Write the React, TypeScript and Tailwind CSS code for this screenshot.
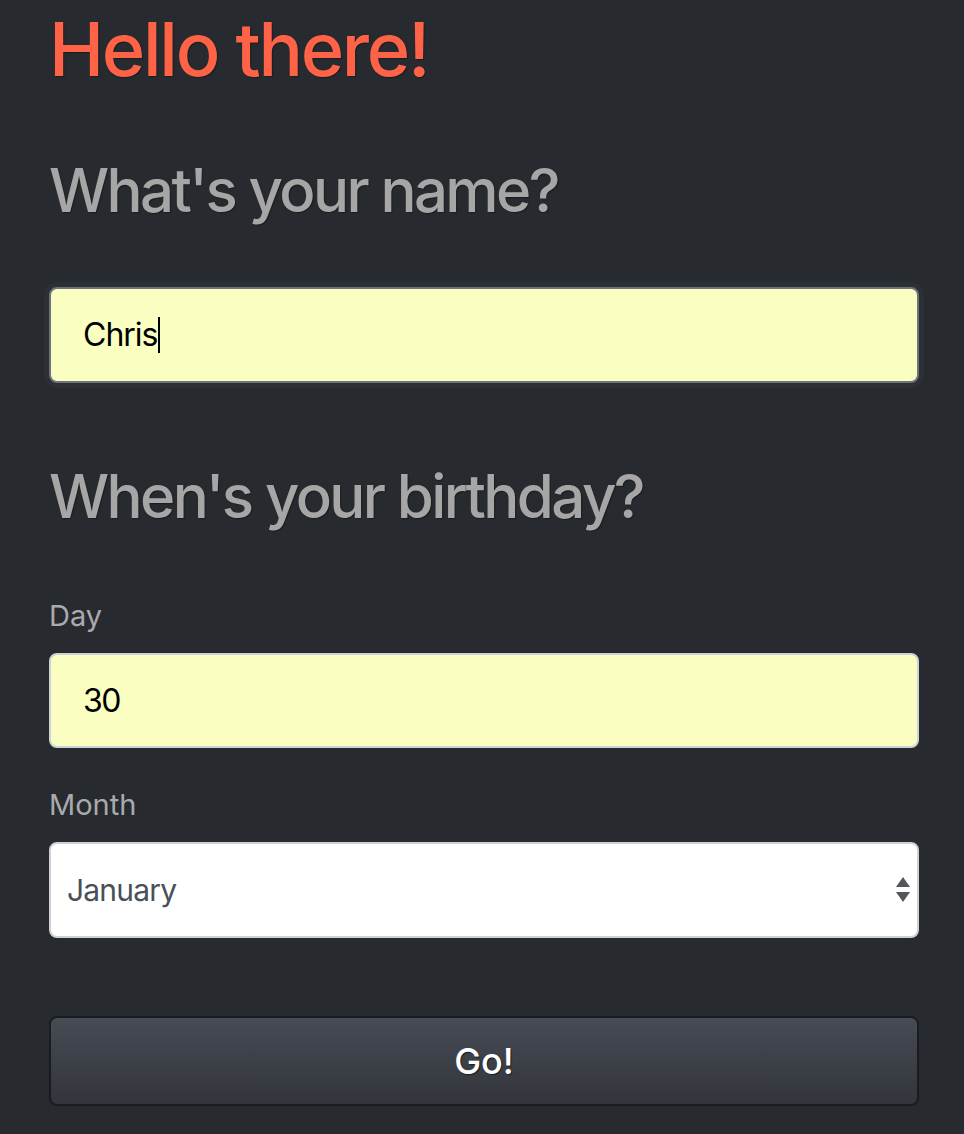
import React from "react";

export default function App() {
  return (
    <div
      className="min-h-[1134px] w-full bg-[#272a2f] pl-[49px] pr-[45px] pt-[12px] pb-[29px]"
      style={{ fontFamily: "Inter, 'Noto Sans', 'Liberation Sans', sans-serif" }}
    >
      <h1 className="text-[74px] leading-none font-medium text-[#ff6347] tracking-[-2.3px] [text-shadow:1px_1px_1px_#1b1d21]">
        Hello there!
      </h1>

      <h2 className="mt-[74px] text-[60px] leading-none font-medium text-[#a6a6a6] tracking-[-2.6px] [text-shadow:1px_1px_1px_#1b1d21]">
        What's your name?
      </h2>

      <div className="mt-[67px] rounded-[8px] shadow-[0_0_0_5px_#2c2f35]">
        <div className="flex h-[96px] items-center rounded-[8px] border-2 border-[#6c737a] bg-[#fafec1] pl-[32px] text-[32px] tracking-[-1px] text-black">
          <span>Chris</span>
          <span className="ml-[1px] inline-block h-[36px] w-[2px] bg-black" />
        </div>
      </div>

      <h2 className="mt-[83px] text-[60px] leading-none font-medium text-[#a6a6a6] tracking-[-2.6px] [text-shadow:1px_1px_1px_#1b1d21]">
        When's your birthday?
      </h2>

      <label className="mt-[75px] block text-[29px] leading-none text-[#a8aaad]">Day</label>
      <input
        readOnly
        value="30"
        className="mt-[23px] block h-[95px] w-full rounded-[8px] border-2 border-[#ced2d6] bg-[#fafec1] pl-[32px] text-[32px] tracking-[-1.5px] text-black outline-none"
        style={{ fontFamily: "Inter, 'Noto Sans', 'Liberation Sans', sans-serif" }}
      />

      <label className="mt-[42px] block text-[29px] leading-none text-[#a8aaad]">Month</label>
      <div className="relative mt-[23px]">
        <div className="flex h-[96px] w-full items-center rounded-[8px] border-2 border-[#ced2d6] bg-white pl-[16px] text-[30px] tracking-[-0.8px] text-[#495057]">
          January
        </div>
        <svg
          className="absolute right-[8px] top-[34px]"
          width="16"
          height="28"
          viewBox="0 0 16 28"
        >
          <polygon points="8,1 15,11 1,11" fill="#53575c" />
          <polygon points="1,16 15,16 8,26" fill="#53575c" />
        </svg>
      </div>

      <button className="mt-[78px] flex h-[90px] w-full items-center justify-center rounded-[8px] border-2 border-[#1a1c1f] bg-gradient-to-b from-[#474b54] to-[#32353b] text-[36px] font-medium text-white [text-shadow:1px_1px_1px_#1a1c1f]">
        Go!
      </button>
    </div>
  );
}
